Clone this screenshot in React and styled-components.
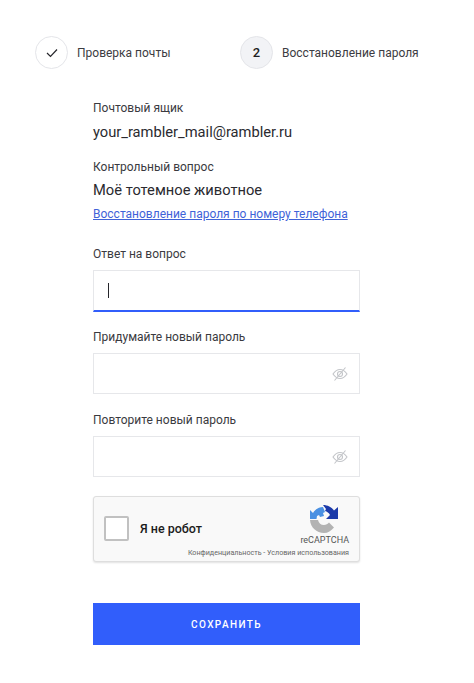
import React from "react";
import styled, { createGlobalStyle } from "styled-components";

const GlobalStyle = createGlobalStyle`
  html, body {
    margin: 0;
    padding: 0;
    background: #fff;
  }
  body {
    font-family: Roboto, "Liberation Sans", sans-serif;
    color: #26262b;
  }
`;

const Page = styled.div`
  width: 474px;
  height: 683px;
  overflow: hidden;
  box-sizing: border-box;
  padding-top: 36px;
`;

const Steps = styled.div`
  display: flex;
  padding-left: 35px;
  height: 33px;
`;

const Step = styled.div`
  display: flex;
  align-items: center;
  gap: 9px;
  width: ${(p) => p.$width}px;
`;

const StepCircle = styled.div`
  width: 33px;
  height: 33px;
  box-sizing: border-box;
  border-radius: 50%;
  border: 1px solid #e4e5e9;
  background: ${(p) => (p.$active ? "#f2f3f6" : "#fff")};
  display: flex;
  align-items: center;
  justify-content: center;
  font-size: 13px;
  font-weight: 500;
  color: #1d1d22;
`;

const StepLabel = styled.span`
  font-size: 12px;
  color: #3c3c42;
  white-space: nowrap;
`;

const Form = styled.div`
  width: 267px;
  margin: 30px 0 0 93px;
  display: flex;
  flex-direction: column;
`;

const Label = styled.div`
  font-size: 12px;
  line-height: 18px;
  color: #3a3a40;
  margin-top: ${(p) => p.$top || 0}px;
`;

const Value = styled.div`
  font-size: 14.7px;
  line-height: 20px;
  color: #2a2a2f;
  margin-top: ${(p) => p.$top || 0}px;
`;

const PhoneLink = styled.a`
  font-size: 12px;
  line-height: 18px;
  color: #3f63d8;
  text-decoration: underline;
  margin-top: 5px;
  white-space: nowrap;
`;

const Field = styled.div`
  height: ${(p) => (p.$focused ? 42 : 41)}px;
  box-sizing: border-box;
  margin-top: 7px;
  border: 1px solid #e6e7ea;
  border-bottom: ${(p) => (p.$focused ? "2px solid #315efb" : "1px solid #e6e7ea")};
  background: #fff;
  display: flex;
  align-items: center;
  justify-content: ${(p) => (p.$focused ? "flex-start" : "flex-end")};
  padding: 0 11px 0 14px;
`;

const Caret = styled.span`
  width: 1px;
  height: 15px;
  background: #26262b;
`;

const EyeIcon = styled.svg`
  width: 16px;
  height: 16px;
  display: block;
`;

const Captcha = styled.div`
  margin-top: 19px;
  height: 66px;
  box-sizing: border-box;
  border: 1px solid #dedede;
  border-radius: 3px;
  background: #f9f9f9;
  box-shadow: 0 1px 2px rgba(0, 0, 0, 0.12);
  display: flex;
  align-items: flex-start;
  justify-content: space-between;
  padding: 8px 10px 0 10px;
`;

const CaptchaLeft = styled.div`
  display: flex;
  align-items: center;
  gap: 11px;
  width: 80px;
  margin-top: 11px;
`;

const CheckBox = styled.div`
  width: 25px;
  height: 25px;
  flex-shrink: 0;
  box-sizing: border-box;
  border: 2px solid #c1c1c1;
  border-radius: 2px;
  background: #fff;
`;

const CaptchaText = styled.span`
  font-size: 12.5px;
  font-weight: 500;
  color: #1c1c1c;
  white-space: nowrap;
`;

const CaptchaRight = styled.div`
  display: flex;
  flex-direction: column;
  align-items: flex-end;
`;

const CaptchaBrand = styled.span`
  font-size: 9px;
  line-height: 12px;
  color: #555;
  margin-top: 1px;
`;

const CaptchaTerms = styled.span`
  font-size: 7.15px;
  line-height: 10px;
  color: #666;
  white-space: nowrap;
  margin-top: 2px;
`;

const LogoIcon = styled.svg`
  width: 28px;
  height: 28px;
  display: block;
  margin-right: 11px;
`;

const SaveButton = styled.button`
  margin-top: 41px;
  height: 42px;
  border: none;
  background: #315efb;
  color: #fff;
  font-family: inherit;
  font-size: 10px;
  font-weight: 500;
  letter-spacing: 1.4px;
`;

const Eye = () => (
  <EyeIcon viewBox="0 0 16 16" fill="none" stroke="#c3c5c9" strokeWidth="1.1">
    <path d="M1 8c2-3 4.400-4.500 7-4.500S13 5 15 8c-2 3-4.400 4.500-7 4.500S3 11 1 8z" />
    <circle cx="8" cy="8" r="2.500" />
    <path d="M13.500 1.500L2.500 14.500" />
  </EyeIcon>
);

const RecaptchaLogo = () => (
  <LogoIcon viewBox="0 0 28 28">
    <path d="M0 14V5l3 3C5.500 4 9 2 13 2l2 5-2 1 1 3-4 1-1-2-2 1-.5 3z" fill="#4a90e2" />
    <path d="M13 0c5 0 9 2.500 11 5.500l4-3.500v12H16l4-4c-1-2-3-3.500-5-4l1-2-3-4z" fill="#1c3aa9" />
    <path d="M0 15h8c.6 3 3 5 6 5 2 0 3.800-1 5-2.500l5 5C21 26 18 28 14 28 6.500 28 .5 22.500 0 15z" fill="#b3b3b3" />
  </LogoIcon>
);

function App() {
  return (
    <Page>
      <GlobalStyle />
      <Steps>
        <Step $width={205}>
          <StepCircle>
            <svg width="12" height="10" viewBox="0 0 12 10" fill="none" stroke="#26262b" strokeWidth="1.200">
              <path d="M1 5l3.500 3.500L11 1.500" />
            </svg>
          </StepCircle>
          <StepLabel>Проверка почты</StepLabel>
        </Step>
        <Step $width={200}>
          <StepCircle $active>2</StepCircle>
          <StepLabel>Восстановление пароля</StepLabel>
        </Step>
      </Steps>
      <Form>
        <Label>Почтовый ящик</Label>
        <Value $top={5}>your_rambler_mail@rambler.ru</Value>
        <Label $top={16}>Контрольный вопрос</Label>
        <Value $top={4}>Моё тотемное животное</Value>
        <PhoneLink href="#">Восстановление пароля по номеру телефона</PhoneLink>
        <Label $top={22}>Ответ на вопрос</Label>
        <Field $focused>
          <Caret />
        </Field>
        <Label $top={16}>Придумайте новый пароль</Label>
        <Field>
          <Eye />
        </Field>
        <Label $top={17}>Повторите новый пароль</Label>
        <Field>
          <Eye />
        </Field>
        <Captcha>
          <CaptchaLeft>
            <CheckBox />
            <CaptchaText>Я не робот</CaptchaText>
          </CaptchaLeft>
          <CaptchaRight>
            <RecaptchaLogo />
            <CaptchaBrand>reCAPTCHA</CaptchaBrand>
            <CaptchaTerms>Конфиденциальность - Условия использования</CaptchaTerms>
          </CaptchaRight>
        </Captcha>
        <SaveButton>СОХРАНИТЬ</SaveButton>
      </Form>
    </Page>
  );
}

export default App;
